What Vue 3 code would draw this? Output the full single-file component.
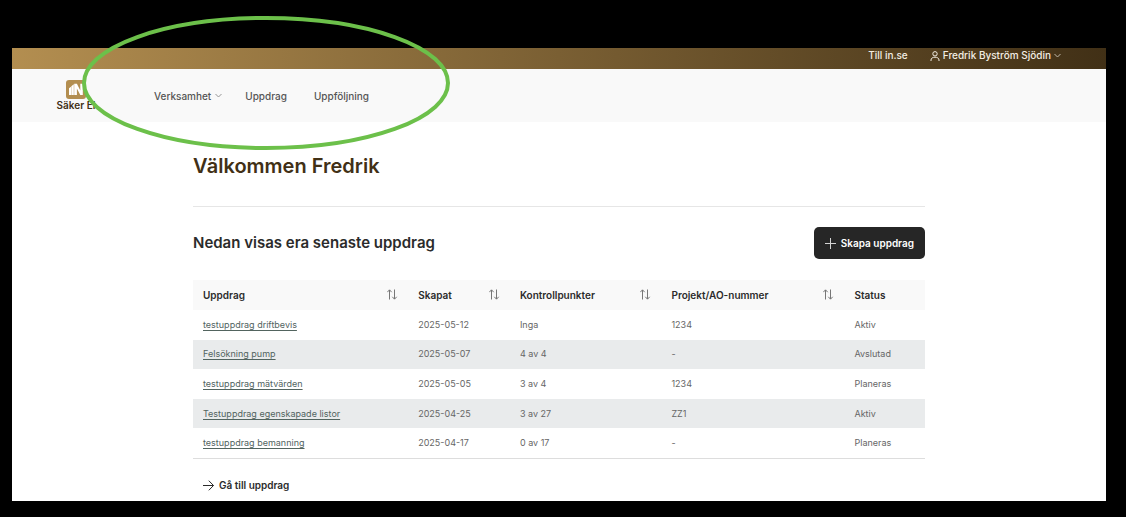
<script setup>
const columns = [
  { label: 'Uppdrag', key: 'name', sortable: true },
  { label: 'Skapat', key: 'created', sortable: true },
  { label: 'Kontrollpunkter', key: 'checks', sortable: true },
  { label: 'Projekt/AO-nummer', key: 'project', sortable: true },
  { label: 'Status', key: 'status', sortable: false },
]

const rows = [
  { name: 'testuppdrag driftbevis', created: '2025-05-12', checks: 'Inga', project: '1234', status: 'Aktiv' },
  { name: 'Felsökning pump', created: '2025-05-07', checks: '4 av 4', project: '-', status: 'Avslutad' },
  { name: 'testuppdrag mätvärden', created: '2025-05-05', checks: '3 av 4', project: '1234', status: 'Planeras' },
  { name: 'Testuppdrag egenskapade listor', created: '2025-04-25', checks: '3 av 27', project: 'ZZ1', status: 'Aktiv' },
  { name: 'testuppdrag bemanning', created: '2025-04-17', checks: '0 av 17', project: '-', status: 'Planeras' },
]
</script>

<template>
  <div class="stage">
    <div class="page">
      <div class="topbar">
        <a href="#" class="toplink">Till in.se</a>
        <button type="button" class="user">
          <svg width="10" height="10" viewBox="0 0 10 10" fill="none" stroke="currentColor" aria-hidden="true">
            <circle cx="5" cy="2.8" r="2.2" />
            <path d="M1 10V9C1 7.200 2.700 6.200 5 6.200S9 7.200 9 9V10" />
          </svg>
          <span>Fredrik Byström Sjödin</span>
          <svg class="chevron" width="7" height="5" viewBox="0 0 7 5" fill="none" stroke="currentColor" aria-hidden="true">
            <path d="M.5 1L3.500 4L6.500 1" />
          </svg>
        </button>
      </div>

      <header class="header">
        <a href="#" class="brand">
          <svg width="20" height="19" viewBox="0 0 20 19" aria-hidden="true">
            <rect width="20" height="19" rx="3" fill="#b38e50" />
            <path d="M3 15V8.300L5 6.800V15ZM5.300 15V6.300L7.800 4.300V15ZM8.200 15V3.800H10.900L14.300 10.500V3.800H16.800V15H14.300L10.900 8.600V15Z" fill="#fff" />
          </svg>
          <span>Säker El</span>
        </a>
        <nav class="nav">
          <button type="button" class="navitem">
            Verksamhet
            <svg class="chevron" width="7" height="5" viewBox="0 0 7 5" fill="none" stroke="currentColor" aria-hidden="true">
              <path d="M.5 1L3.500 4L6.500 1" />
            </svg>
          </button>
          <a href="#" class="navitem">Uppdrag</a>
          <a href="#" class="navitem">Uppföljning</a>
        </nav>
      </header>

      <main class="content">
        <h1>Välkommen Fredrik</h1>
        <div class="section-head">
          <h2>Nedan visas era senaste uppdrag</h2>
          <button type="button" class="create">
            <svg width="11" height="11" viewBox="0 0 11 11" fill="none" stroke="currentColor" aria-hidden="true">
              <path d="M5.500 0V11M0 5.500H11" />
            </svg>
            Skapa uppdrag
          </button>
        </div>

        <table>
          <colgroup>
            <col class="c-name" />
            <col class="c-created" />
            <col class="c-checks" />
            <col class="c-project" />
            <col />
          </colgroup>
          <thead>
            <tr>
              <th v-for="col in columns" :key="col.key" scope="col">
                <div class="th">
                  {{ col.label }}
                  <button v-if="col.sortable" type="button" class="sort" :aria-label="'Sortera ' + col.label">
                    <svg width="11" height="11" viewBox="0 0 11 11" fill="none" stroke="currentColor" aria-hidden="true">
                      <path d="M2.500 10.500V1M.3 3.200L2.500 .8L4.700 3.200M7.500 .5V10M5.300 7.800L7.500 10.200L9.700 7.800" />
                    </svg>
                  </button>
                </div>
              </th>
            </tr>
          </thead>
          <tbody>
            <tr v-for="row in rows" :key="row.name">
              <td><a href="#">{{ row.name }}</a></td>
              <td>{{ row.created }}</td>
              <td>{{ row.checks }}</td>
              <td>{{ row.project }}</td>
              <td>{{ row.status }}</td>
            </tr>
          </tbody>
        </table>

        <a href="#" class="more">
          <svg width="11" height="11" viewBox="0 0 11 11" fill="none" stroke="currentColor" aria-hidden="true">
            <path d="M0 5.500H10.500M5.800 .7L10.500 5.500L5.800 10.300" />
          </svg>
          Gå till uppdrag
        </a>
      </main>
    </div>

    <svg class="marker" width="369" height="135" viewBox="0 0 369 135" fill="none" aria-hidden="true">
      <ellipse cx="184" cy="67" rx="182" ry="65" stroke="#6cc04a" stroke-width="4" />
    </svg>
  </div>
</template>

<style>
body {
  margin: 0;
  background: #000;
}
</style>

<style scoped>
.stage {
  position: relative;
  padding: 48px 20px 16px 12px;
  background: #000;
  font-family: Inter, "Liberation Sans", sans-serif;
  color: #2b2b2b;
}

button {
  font: inherit;
  color: inherit;
  background: none;
  border: 0;
  padding: 0;
  cursor: pointer;
}

a {
  color: inherit;
  text-decoration: none;
}

svg {
  display: block;
  flex: none;
}

.page {
  background: #fff;
}

.topbar {
  display: flex;
  justify-content: flex-end;
  gap: 22px;
  height: 21px;
  padding-right: 45px;
  background: linear-gradient(90deg, #b38e50, #413016);
  color: #f3eee4;
  font-size: 10px;
  line-height: 15px;
  font-weight: 500;
}

.user {
  display: flex;
  align-items: center;
  gap: 3px;
  height: 15px;
}

.user .chevron {
  opacity: 0.7;
}

.header {
  display: flex;
  align-items: center;
  height: 53px;
  padding: 0 44px;
  background: #f9f9f9;
}

.brand {
  display: flex;
  flex-direction: column;
  align-items: center;
  gap: 0;
  width: 40px;
  color: #413016;
  font-size: 10px;
  line-height: 12px;
  font-weight: 600;
  white-space: nowrap;
}

.nav {
  display: flex;
  gap: 23px;
  margin-left: 58px;
  color: #555;
  font-size: 10px;
  line-height: 16px;
  font-weight: 500;
}

.navitem {
  display: flex;
  align-items: center;
  gap: 4px;
}

a.navitem {
  padding-right: 4px;
}

.navitem .chevron {
  opacity: 0.6;
}

.content {
  max-width: 732px;
  margin: 0 auto;
  padding: 30px 0 8px;
}

h1 {
  margin: 0;
  padding-bottom: 26px;
  border-bottom: 1px solid #e6e6e6;
  color: #413016;
  font-size: 20px;
  line-height: 28px;
  font-weight: 600;
}

.section-head {
  display: flex;
  align-items: center;
  justify-content: space-between;
  margin: 20px 0 21px;
}

h2 {
  margin: 0;
  font-size: 15px;
  line-height: 20px;
  font-weight: 600;
}

.create {
  display: flex;
  align-items: center;
  gap: 5px;
  height: 32px;
  padding: 0 11px;
  border-radius: 5px;
  background: #262626;
  color: #fff;
  font-size: 10px;
  font-weight: 600;
}

.create svg {
  opacity: 0.8;
}

table {
  width: 100%;
  height: 179px;
  table-layout: fixed;
  border-collapse: separate;
  border-spacing: 0;
  border-bottom: 1px solid #ddd;
  font-size: 9px;
  line-height: 14px;
}

.c-name {
  width: 29.4%;
}

.c-created {
  width: 13.9%;
}

.c-checks {
  width: 20.7%;
}

.c-project {
  width: 25%;
}

th,
td {
  padding: 0 10px;
  text-align: left;
}

th {
  height: 30px;
  background: #f9f9f9;
  font-size: 10px;
  font-weight: 600;
  white-space: nowrap;
}

.th {
  display: flex;
  align-items: center;
  justify-content: space-between;
}

.sort {
  padding-bottom: 2px;
  color: #777;
}

td {
  color: #666;
}

td a {
  color: #52645f;
  text-decoration: underline;
  text-underline-offset: 2px;
}

tbody tr:nth-child(even) {
  background: #e9ebec;
}

.more {
  display: flex;
  align-items: center;
  gap: 5px;
  width: fit-content;
  margin: 18px 10px 0;
  font-size: 10px;
  line-height: 16px;
  font-weight: 600;
}

.marker {
  position: absolute;
  left: 82px;
  top: 16px;
  pointer-events: none;
}
</style>
